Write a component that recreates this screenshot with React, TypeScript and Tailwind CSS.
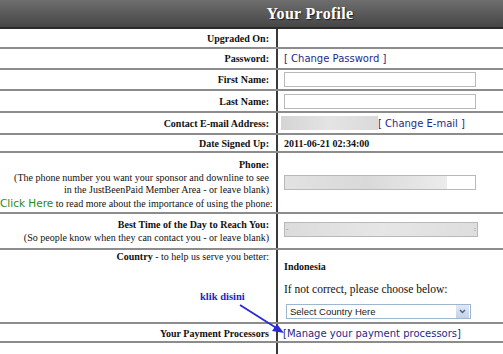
import React from "react";

const serif = { fontFamily: '"Liberation Serif", "Times New Roman", serif' };
const sans = { fontFamily: '"DejaVu Sans", Verdana, sans-serif' };

function Row({ left, right, h, className = "" }: { left: React.ReactNode; right: React.ReactNode; h: string; className?: string }) {
  return (
    <div className={`flex border-b-2 border-[#8c8c8c] ${h} ${className}`}>
      <div className="w-[278px] shrink-0 border-r-2 border-[#3a3a3a] pr-[7px] text-right whitespace-nowrap">{left}</div>
      <div className="flex-1 pl-[6px]">{right}</div>
    </div>
  );
}

export default function App() {
  return (
    <div className="relative w-[503px] h-[354px] overflow-hidden bg-white text-[10px] text-[#111]" style={serif}>
      <div className="h-[29px] flex items-center justify-center pl-[117px] bg-gradient-to-b from-[#6e6e6e] to-[#464646] border-b-2 border-[#2a2a2a]">
        <span className="text-white font-bold text-[16px] tracking-[0.3px]" style={{ textShadow: "1px 1px 1px #222" }}>Your Profile</span>
      </div>

      <Row h="h-[20px]" left={<div className="font-bold leading-[19px]">Upgraded On:</div>} right={null} />
      <Row
        h="h-[21px]"
        left={<div className="font-bold leading-[20px]">Password:</div>}
        right={<div className="leading-[20px] text-[10px] text-[#1f2a8a]" style={sans}>[ Change Password ]</div>}
      />
      <Row
        h="h-[21px]"
        left={<div className="font-bold leading-[20px]">First Name:</div>}
        right={<div className="mt-[2px] w-[192px] h-[15px] border border-[#b9b9b9] bg-white" />}
      />
      <Row
        h="h-[22px]"
        left={<div className="font-bold leading-[21px]">Last Name:</div>}
        right={<div className="mt-[3px] w-[192px] h-[15px] border border-[#b9b9b9] bg-white" />}
      />
      <Row
        h="h-[22px]"
        left={<div className="font-bold leading-[21px]">Contact E-mail Address:</div>}
        right={
          <div className="flex items-center h-[20px] -ml-[3px]">
            <div className="w-[97px] h-[14px] bg-gradient-to-r from-[#d4d4d4] via-[#e4e4e4] to-[#dadada]" />
            <span className="text-[10px] text-[#1f2a8a]" style={sans}>[ Change E-mail ]</span>
          </div>
        }
      />
      <Row
        h="h-[18px]"
        left={<div className="font-bold leading-[18px]">Date Signed Up:</div>}
        right={<div className="leading-[18px] font-bold">2011-06-21 02:34:00</div>}
      />
      <Row
        h="h-[61px]"
        left={
          <div className="pt-[6px] leading-[12.5px]">
            <div className="font-bold">Phone:</div>
            <div>(The phone number you want your sponsor and downline to see</div>
            <div>in the JustBeenPaid Member Area - or leave blank)</div>
            <div>
              <span className="text-[#2a8a1a] text-[10.5px]" style={sans}>Click Here</span> to read more about the importance of using the phone:
            </div>
          </div>
        }
        right={
          <div className="mt-[22px] w-[192px] h-[15px] border border-[#b9b9b9] bg-white flex">
            <div className="w-[162px] h-full bg-gradient-to-r from-[#e2e2e2] via-[#d9d9d9] to-[#ececec]" />
          </div>
        }
      />
      <Row
        h="h-[36px]"
        left={
          <div className="pt-[5px] leading-[12.5px]">
            <div className="font-bold">Best Time of the Day to Reach You:</div>
            <div>(So people know when they can contact you - or leave blank)</div>
          </div>
        }
        right={
          <div className="mt-[8px] w-[194px] h-[15px] border border-[#b9b9b9] bg-gradient-to-r from-[#dcdcdc] via-[#e6e6e6] to-[#dedede] flex items-center justify-between px-[1px] text-[7px] text-[#777] leading-none">
            <span>-</span>
            <span>:</span>
          </div>
        }
      />
      <Row
        h="h-[74px]"
        left={
          <div className="pt-[1px] leading-[12px]">
            <span className="font-bold">Country</span> - to help us serve you better:
          </div>
        }
        right={
          <div className="pt-[10px]">
            <div className="font-bold leading-[13px]">Indonesia</div>
            <div className="mt-[10px] leading-[13px] text-[11.5px]">If not correct, please choose below:</div>
            <div className="mt-[8px] ml-[2px] w-[185px] h-[15px] border border-[#9fb6cf] flex items-center bg-white">
              <span className="flex-1 pl-[3px] text-[9.5px] text-[#222] leading-none" style={{ fontFamily: '"Liberation Sans", Arial, sans-serif' }}>
                Select Country Here
              </span>
              <div className="w-[13px] h-[13px] bg-gradient-to-b from-[#dfe8f6] to-[#c2d3ea] flex items-center justify-center mr-[1px]">
                <svg width="7" height="5" viewBox="0 0 7 5">
                  <path d="M1 1 L3.5 3.5 L6 1" stroke="#4d6185" strokeWidth="1.4" fill="none" />
                </svg>
              </div>
            </div>
          </div>
        }
      />
      <Row
        h="h-[19px]"
        left={<div className="font-bold leading-[19px]">Your Payment Processors</div>}
        right={
          <div className="-ml-[1px] leading-[19px] text-[10px] text-[#1f2a8a]" style={sans}>
            [Manage your payment processors]
          </div>
        }
      />
      <div className="flex h-[20px]">
        <div className="w-[278px] shrink-0 border-r-2 border-[#3a3a3a]" />
      </div>

      <div className="absolute left-[200px] top-[292px] text-[10.5px] font-bold text-[#2323c8] leading-none">klik disini</div>
      <svg className="absolute left-0 top-0" width="503" height="354" viewBox="0 0 503 354">
        <line x1="240" y1="305" x2="278" y2="329" stroke="#2a2ad0" strokeWidth="1.8" />
        <polygon points="284,333 272,331 277,324" fill="#2a2ad0" />
      </svg>
    </div>
  );
}
